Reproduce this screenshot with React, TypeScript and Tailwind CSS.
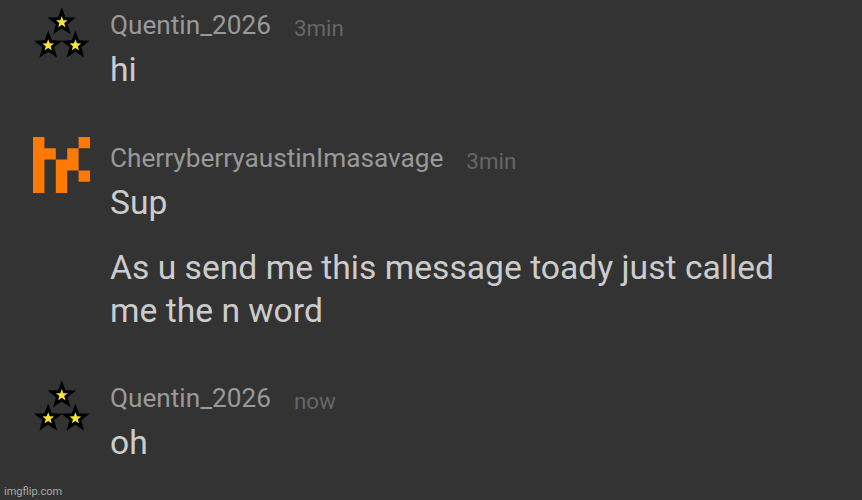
interface Message {
  user: string
  time: string
  avatar: "stars" | "pixels"
  lines: string[][]
}

const messages: Message[] = [
  { user: "Quentin_2026", time: "3min", avatar: "stars", lines: [["hi"]] },
  {
    user: "CherryberryaustinImasavage",
    time: "3min",
    avatar: "pixels",
    lines: [["Sup"], ["As u send me this message toady just called", "me the n word"]]
  },
  { user: "Quentin_2026", time: "now", avatar: "stars", lines: [["oh"]] }
]

/* ---------- AVATARS ---------- */

// centre x, centre y, outer radius
const starPoints = (cx: number, cy: number, r: number) =>
  Array.from({ length: 10 }, (_, i) => {
    const radius = i % 2 ? r * 0.42 : r
    const angle = (Math.PI / 5) * i - Math.PI / 2
    return `${(cx + radius * Math.cos(angle)).toFixed(2)},${(cy + radius * Math.sin(angle)).toFixed(2)}`
  }).join(" ")

const StarsAvatar = () => (
  <svg viewBox="0 0 57 57" className="block h-[57px] w-[57px]">
    {[[28.8, 17.2], [15.2, 40.4], [42.4, 40.4]].map(([x, y]) => (
      <g key={x}>
        <polygon points={starPoints(x, y, 14.9)} fill="#000" />
        <polygon points={starPoints(x, y, 6.1)} fill="#f5e636" />
      </g>
    ))}
  </svg>
)

const PixelsAvatar = () => (
  <svg viewBox="0 0 5 5" preserveAspectRatio="none" className="block h-[56px] w-[57px]">
    <path
      d="M0 0h1v1h1v1H1v3H0zM4 0h1v1H4zM3 1h1v2H3v2H2V2h1zM4 3h1v1H4z"
      fill="#ff7a05"
    />
  </svg>
)

const MessageRow = ({ message }: { message: Message }) => (
  <article className="flex gap-5">
    <div className={message.avatar === "stars" ? "-mt-1" : "-mt-[5px]"}>
      {message.avatar === "stars" ? <StarsAvatar /> : <PixelsAvatar />}
    </div>
    <div>
      <header className="flex gap-[23px] leading-8">
        <span className="text-[26.2px] text-[#999]">{message.user}</span>
        <span className="pt-[3px] text-[22.4px] text-[#666]">{message.time}</span>
      </header>
      <div className="mt-[5px] space-y-[23px] text-[33.65px] leading-[42.5px] text-[#ccc]">
        {message.lines.map(lines => (
          <p key={lines[0]} className="whitespace-nowrap">
            {lines.map(line => (
              <span key={line} className="block">{line}</span>
            ))}
          </p>
        ))}
      </div>
    </div>
  </article>
)

const App = () => (
  <main className="relative h-[500px] w-[862px] overflow-hidden bg-[#333] pl-[33px] pt-[9px] font-['Roboto',sans-serif]">
    <div className="flex flex-col gap-[50.2px]">
      {messages.map((message, i) => (
        <MessageRow key={i} message={message} />
      ))}
    </div>
    <span className="absolute bottom-0 left-1 text-[11px] leading-4 text-[#aaa]">
      imgflip.com
    </span>
  </main>
)

export default App
